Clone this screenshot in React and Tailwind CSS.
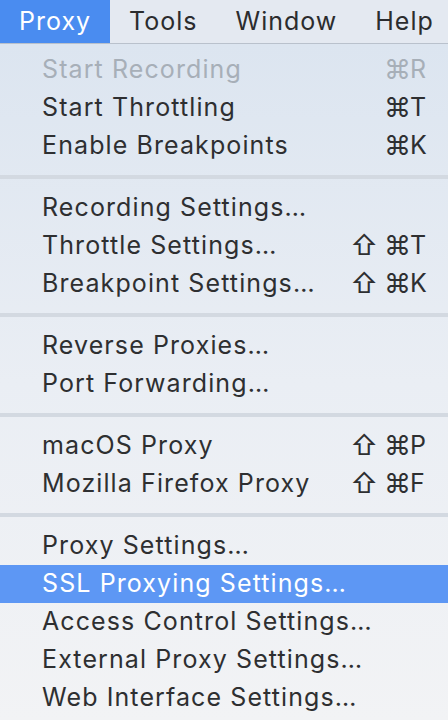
import React from 'react';

const menus = ['Proxy', 'Tools', 'Window', 'Help'];

const sections = [
  [
    { label: 'Start Recording', mods: ['⌘'], key: 'R', disabled: true },
    { label: 'Start Throttling', mods: ['⌘'], key: 'T' },
    { label: 'Enable Breakpoints', mods: ['⌘'], key: 'K' },
  ],
  [
    { label: 'Recording Settings…' },
    { label: 'Throttle Settings…', mods: ['⇧', '⌘'], key: 'T' },
    { label: 'Breakpoint Settings…', mods: ['⇧', '⌘'], key: 'K' },
  ],
  [
    { label: 'Reverse Proxies…' },
    { label: 'Port Forwarding…' },
  ],
  [
    { label: 'macOS Proxy', mods: ['⇧', '⌘'], key: 'P' },
    { label: 'Mozilla Firefox Proxy', mods: ['⇧', '⌘'], key: 'F' },
  ],
  [
    { label: 'Proxy Settings…' },
    { label: 'SSL Proxying Settings…', active: true },
    { label: 'Access Control Settings…' },
    { label: 'External Proxy Settings…' },
    { label: 'Web Interface Settings…' },
  ],
];

function MenuItem({ item }) {
  const color = item.active
    ? 'bg-[#5d97f4] text-white'
    : item.disabled
      ? 'text-[#a7afb8]'
      : 'text-[#2e2f31]';
  return (
    <div className={`flex h-[38px] items-center pl-[42px] pr-[17px] ${color}`}>
      <span className="flex-1 whitespace-nowrap">{item.label}</span>
      {item.key && (
        <span className="flex items-center">
          <span className="mr-[-5px] flex w-[64px] justify-end gap-[6px] text-[27px] tracking-normal">
            {item.mods.map((m) => (
              <span key={m}>{m}</span>
            ))}
          </span>
          <span className="w-[25px] pl-[4px]">{item.key}</span>
        </span>
      )}
    </div>
  );
}

export default function App() {
  return (
    <div
      className="h-[720px] w-[448px] overflow-hidden text-[25px] tracking-[1.1px]"
      style={{ fontFamily: 'Inter, "Liberation Sans", sans-serif' }}
    >
      <div className="flex h-[44px] items-center border-b border-[#b9c1cc] bg-[#e4e9f1] text-[#2b2c2e] tracking-[1px]">
        {menus.map((m, i) => (
          <div
            key={m}
            className={
              i === 0
                ? 'flex h-full items-center bg-[#4a8cf0] pl-[19px] pr-[19px] text-white'
                : 'flex h-full items-center px-[19px]'
            }
          >
            {m}
          </div>
        ))}
      </div>
      <div className="h-[676px] bg-gradient-to-b from-[#dce5f0] via-[#eaeef4] to-[#f2f3f5] pt-[7px]">
        {sections.map((sec, si) => (
          <div key={si}>
            {si > 0 && (
              <div className="py-[10px]">
                <div className="h-[4px] bg-[#d3d9e1]" />
              </div>
            )}
            {sec.map((item) => (
              <MenuItem key={item.label} item={item} />
            ))}
          </div>
        ))}
      </div>
    </div>
  );
}
